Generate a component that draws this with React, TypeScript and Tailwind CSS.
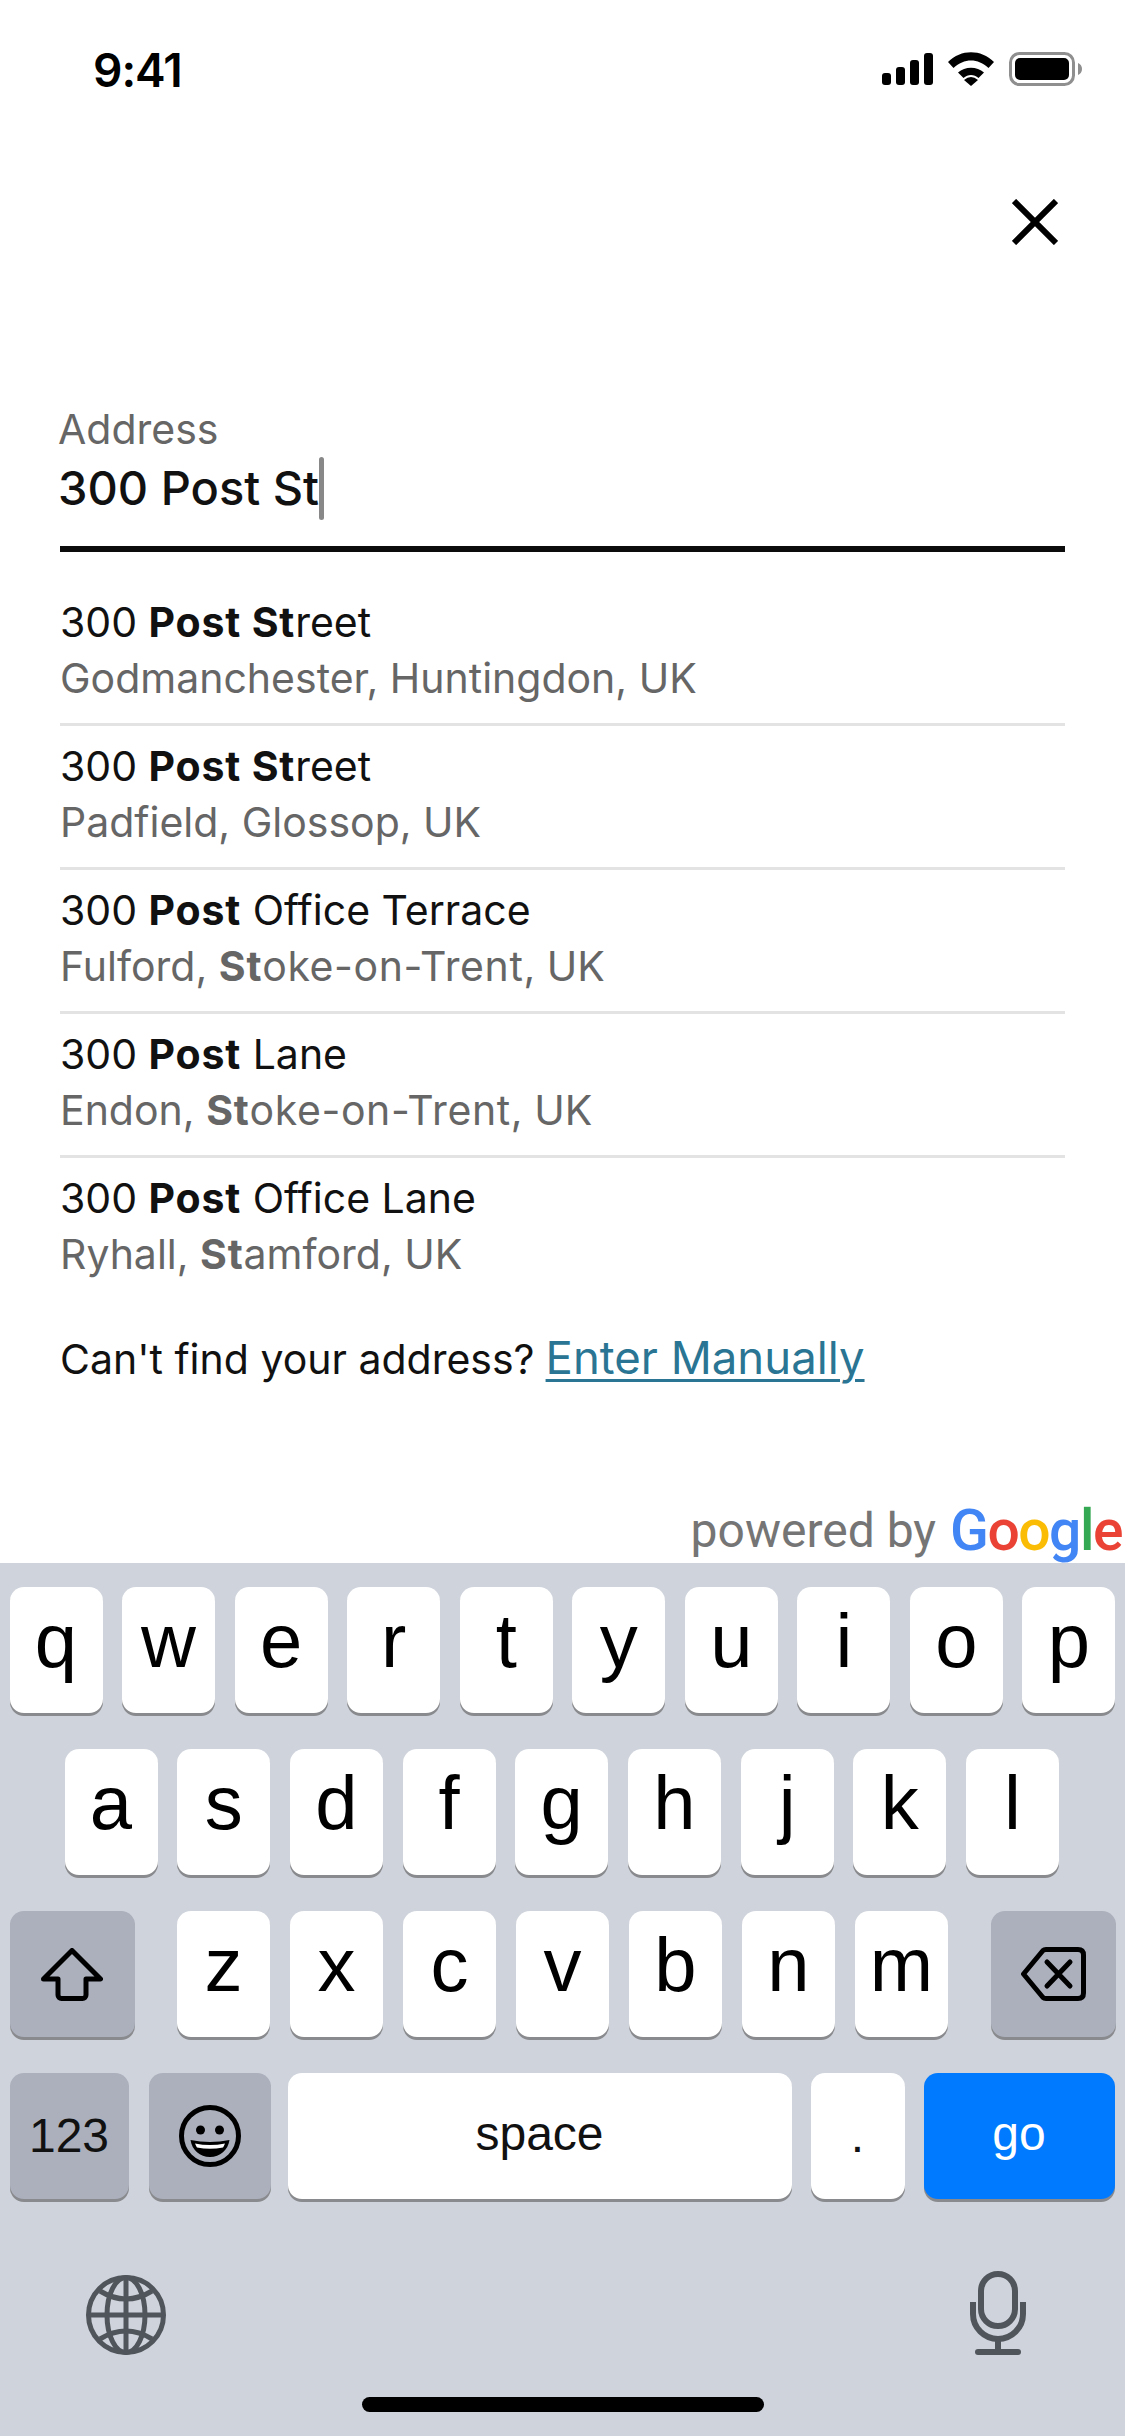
import type { ReactNode } from "react";

const rows = [
  { line: <>300 <b>Post St</b>reet</>, sub: <>Godmanchester, Huntingdon, UK</> },
  { line: <>300 <b>Post St</b>reet</>, sub: <>Padfield, Glossop, UK</> },
  { line: <>300 <b>Post</b> Office Terrace</>, sub: <>Fulford, <b>St</b><span className="tracking-[0.6px]">oke-on-Trent</span>, UK</> },
  { line: <>300 <b>Post</b> Lane</>, sub: <>Endon, <b>St</b><span className="tracking-[0.6px]">oke-on-Trent</span>, UK</> },
  { line: <>300 <b>Post</b> Office Lane</>, sub: <>Ryhall, <b>St</b>amford, UK</> },
];

function Key({ children, className = "w-[93px] bg-white" }: { children: ReactNode; className?: string }) {
  return (
    <div className={`flex h-[126px] shrink-0 items-center justify-center rounded-[14px] shadow-[0_3px_0_#898a8d] ${className}`}>
      {children}
    </div>
  );
}

function Letter({ char }: { char: string }) {
  return (
    <Key>
      <span className="pb-[18px] text-[76px] leading-none text-black">{char}</span>
    </Key>
  );
}

function StatusIcons() {
  return (
    <div className="flex items-center gap-[15px]">
      <svg width="51" height="32" viewBox="0 0 51 32" fill="#000">
        <rect x="0" y="20" width="9" height="12" rx="3" />
        <rect x="14" y="14" width="9" height="18" rx="3" />
        <rect x="28" y="7" width="9" height="25" rx="3" />
        <rect x="42" y="0" width="9" height="32" rx="3" />
      </svg>
      <svg width="46" height="34" viewBox="0 0 46 34" fill="#000">
        <path d="M0 10C13-3 33-3 46 10L40.500 16C30 6 16 6 5.500 16Z" />
        <path d="M10 20.500C17 14 29 14 36 20.500L30.500 26C26 22 20 22 15.500 26Z" />
        <path d="M16 28Q23 22 30 28L23 34Z" />
      </svg>
      <svg width="73" height="34" viewBox="0 0 73 34">
        <rect x="1.500" y="1.500" width="63" height="31" rx="9" fill="none" stroke="#8f8f8f" strokeWidth="3" />
        <rect x="6" y="6" width="54" height="22" rx="5" fill="#000" />
        <path d="M69 11C71.500 12 73 14 73 17S71.500 22 69 23Z" fill="#8f8f8f" />
      </svg>
    </div>
  );
}

function ShiftIcon() {
  return (
    <svg width="62" height="53" viewBox="0 0 62 53" fill="none" stroke="#000" strokeWidth="5" strokeLinejoin="round">
      <path d="M31 2.500L59.500 31H45V47A3.500 3.500 0 0 1 41.500 50.500H20.500A3.500 3.500 0 0 1 17 47V31H2.500Z" />
    </svg>
  );
}

function DeleteIcon() {
  return (
    <svg width="65" height="54" viewBox="0 0 65 54" fill="none" stroke="#000" strokeWidth="5" strokeLinecap="round" strokeLinejoin="round">
      <path d="M2.500 27L22 3.500Q23 2.500 25 2.500H57Q62.500 2.500 62.500 8V46Q62.500 51.500 57 51.500H25Q23 51.500 22 50.500Z" />
      <path d="M26 15L49 39M49 15L26 39" />
    </svg>
  );
}

function EmojiIcon() {
  return (
    <svg width="62" height="62" viewBox="0 0 62 62">
      <circle cx="31" cy="31" r="28.500" fill="none" stroke="#000" strokeWidth="5" />
      <circle cx="21.500" cy="25" r="4.500" fill="#000" />
      <circle cx="40.500" cy="25" r="4.500" fill="#000" />
      <path d="M11.500 35Q31 39 50.500 35C49 45 41 52 31 52S13 45 11.500 35Z" fill="#000" />
      <path d="M16 38.500Q31 41.500 46 38.500Q45 41 44 42.500Q31 45 18 42.500Q17 41 16 38.500Z" fill="#fff" />
    </svg>
  );
}

function GlobeIcon() {
  return (
    <svg width="80" height="80" viewBox="0 0 80 80" fill="none" stroke="#50555c" strokeWidth="5">
      <circle cx="40" cy="40" r="37.500" />
      <ellipse cx="40" cy="40" rx="19" ry="37.500" />
      <path d="M40 2.500V77.500M2.500 40H77.500" />
      <path d="M14 16Q40 32 66 16M14 64Q40 48 66 64" />
    </svg>
  );
}

function MicIcon() {
  return (
    <svg width="56" height="84" viewBox="0 0 56 84" fill="none" stroke="#50555c" strokeWidth="6">
      <rect x="11" y="3" width="34" height="52" rx="17" />
      <path d="M3 31V43A25 25 0 0 0 53 43V31" />
      <path d="M28 68V80" />
      <path d="M8 81H48" strokeLinecap="round" />
    </svg>
  );
}

export default function App() {
  return (
    <div className="flex h-[2436px] w-[1125px] flex-col overflow-hidden bg-white font-['Inter',sans-serif] text-[#111]">
      <div className="flex-1">
        <div className="flex h-[132px] items-start justify-between pt-[52px] pl-[93px] pr-[43px]">
          <span className="text-[46px] font-semibold leading-[36px] tracking-[-1px] text-black">9:41</span>
          <StatusIcons />
        </div>

        <div className="mt-[67px] flex justify-end pr-[67px]">
          <svg width="46" height="46" viewBox="0 0 46 46" stroke="#000" strokeWidth="6">
            <path d="M2 2L44 44M44 2L2 44" />
          </svg>
        </div>

        <div className="mt-[156px] pl-[58px] pr-[60px]">
          <div className="text-[41px] leading-[56px] text-[#666]">Address</div>
          <div className="mt-[1px] flex h-[60px] items-center">
            <span className="text-[47px] font-medium leading-[60px]">300 Post St</span>
            <div className="h-[63px] w-[5px] rounded-full bg-[#888]" />
          </div>
        </div>

        <div className="mx-[60px] mt-[28px] h-[6px] bg-[#0c0c0c]" />

        <div className="mx-[60px] pt-[30px]">
          {rows.map((row, i) => (
            <div key={i} className={`pt-[12px] pb-[17px] text-[41px] leading-[56px] [&_b]:font-bold [&_b]:tracking-[0.8px] ${i < rows.length - 1 ? "border-b-[3px] border-[#e3e3e3]" : ""}`}>
              <div>{row.line}</div>
              <div className="text-[#666]">{row.sub}</div>
            </div>
          ))}
        </div>

        <div className="mx-[60px] mt-[25px] flex h-[56px] items-baseline gap-[11px] text-[41px]">
          <span>Can't find your address?</span>
          <a className="text-[45.500px] text-[#2a7593] underline decoration-[3px] underline-offset-[5px]">Enter Manually</a>
        </div>
      </div>

      <div className="flex h-[70px] items-center justify-end gap-[14px] pt-[6px] pr-[3px] font-['Roboto',sans-serif]">
        <span className="text-[48px] text-[#757575]">powered by</span>
        <span className="text-[57px] font-medium tracking-[-1.500px]">
          <span className="text-[#4285f4]">G</span>
          <span className="text-[#ea4335]">o</span>
          <span className="text-[#fbbc05]">o</span>
          <span className="text-[#4285f4]">g</span>
          <span className="text-[#34a853]">l</span>
          <span className="text-[#ea4335]">e</span>
        </span>
      </div>

      <div className="bg-[#cfd3db] pt-[24px] font-['Liberation_Sans',sans-serif]">
        <div className="flex flex-col gap-[36px] px-[9.500px]">
          <div className="flex justify-between">
            {"qwertyuiop".split("").map((c) => <Letter key={c} char={c} />)}
          </div>
          <div className="ml-[55px] flex gap-[19.700px]">
            {"asdfghjkl".split("").map((c) => <Letter key={c} char={c} />)}
          </div>
          <div className="flex">
            <Key className="w-[125px] bg-[#abb0bc]"><ShiftIcon /></Key>
            <div className="ml-[42.500px] flex gap-[20px]">
              {"zxcvbnm".split("").map((c) => <Letter key={c} char={c} />)}
            </div>
            <Key className="ml-auto w-[125px] bg-[#abb0bc]"><DeleteIcon /></Key>
          </div>
          <div className="flex">
            <Key className="w-[119px] bg-[#abb0bc]"><span className="text-[48px]">123</span></Key>
            <Key className="ml-[20px] w-[122px] bg-[#abb0bc]"><EmojiIcon /></Key>
            <Key className="ml-[17px] w-[504px] bg-white"><span className="pb-[5px] text-[48px]">space</span></Key>
            <Key className="ml-[19px] w-[94px] bg-white"><span className="text-[48px]">.</span></Key>
            <Key className="ml-[19px] w-[191px] bg-[#007aff]"><span className="pb-[5px] text-[48px] text-white">go</span></Key>
          </div>
        </div>

        <div className="mt-[72px] flex items-end justify-between pl-[86px] pr-[99px]">
          <GlobeIcon />
          <MicIcon />
        </div>

        <div className="mt-[42px] flex justify-center pb-[24px]">
          <div className="h-[15px] w-[402px] rounded-full bg-black" />
        </div>
      </div>
    </div>
  );
}
